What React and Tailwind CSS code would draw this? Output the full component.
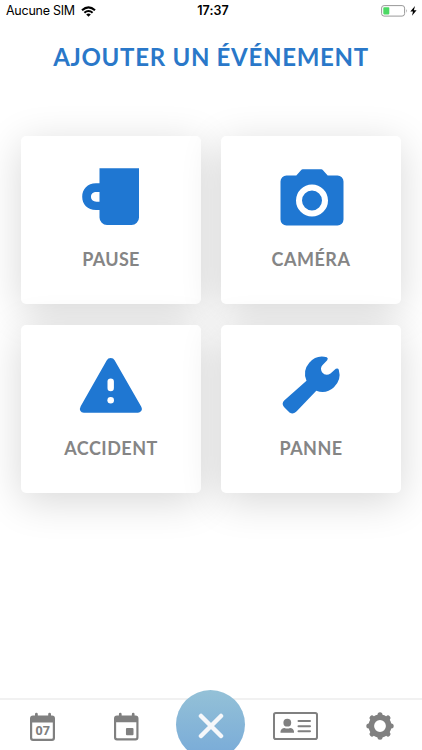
import clsx from "clsx";

const MugIcon = () => (
  <svg viewBox="0 0 72 72" className="w-[72px] h-[72px]" fill="currentColor">
    <path
      fillRule="evenodd"
      d="M24.5 8.3H64V57.5a7.5 7.5 0 0 1-7.5 7.5H32a7.5 7.5 0 0 1-7.5-7.5V50H21C12.5 50 7.2 44 7.2 36.7S12.5 23.3 21 23.3H24.5ZM24.5 32H21.5C18 32 16 34 16 36.8S18 41.7 21.5 41.7H24.5Z"
    />
  </svg>
);

const CameraIcon = () => (
  <svg viewBox="0 0 72 72" className="w-[72px] h-[72px]" fill="currentColor">
    <path d="M27.8 9.3H46.2Q47.3 9.3 48 10.2L52.7 15.5H62.5a6 6 0 0 1 6 6V59.5a6 6 0 0 1-6 6H11.5a6 6 0 0 1-6-6V21.5a6 6 0 0 1 6-6H21.3L26 10.2Q26.7 9.3 27.8 9.3Z" />
    <circle cx="37" cy="40.5" r="13" fill="none" stroke="white" strokeWidth="6" />
  </svg>
);

const WarningIcon = () => (
  <svg viewBox="0 0 72 72" className="w-[72px] h-[72px]" fill="currentColor">
    <path d="M31.8 11.2Q33 9.1 35.7 9.1T39.6 11.2L66 57.2Q67.7 60.2 66.2 62T62.8 63.7H8.8Q6.3 63.7 5.3 61.8T5.7 57.2Z" />
    <rect x="32.5" y="29.4" width="6.4" height="12.8" rx="3.2" fill="white" />
    <circle cx="35.7" cy="51.2" r="3.3" fill="white" />
  </svg>
);

const WrenchIcon = () => (
  <svg viewBox="0 0 72 72" className="w-[72px] h-[72px]" fill="currentColor">
    <path d="M31.5 31.8A17.3 17.3 0 0 1 51.8 8.2Q53.6 9.4 52.2 11.2L47.4 16.2Q44.8 19.3 47 23.2Q50.8 27.6 55.5 24.4L60.8 19.8Q63 18.6 63.8 20.8A17.3 17.3 0 0 1 41.3 41.8L21.7 62.3Q18.5 65.8 14.5 63.4L9 58Q6.2 54.6 9.2 51.5L31.5 31.8Z" />
  </svg>
);

const CalendarFrame = () => (
  <path
    fillRule="evenodd"
    d="M3 2.5H5V1.2a1.4 1.4 0 0 1 2.8 0V2.5H18.2V1.2a1.4 1.4 0 0 1 2.8 0V2.5H22a3 3 0 0 1 3 3V25a3 3 0 0 1-3 3H3a3 3 0 0 1-3-3V5.5a3 3 0 0 1 3-3ZM2.2 9.5V24.8a1 1 0 0 0 1 1H21.8a1 1 0 0 0 1-1V9.5Z"
  />
);

const CalendarDayIcon = () => (
  <svg viewBox="0 0 25 28" className="w-[25px] h-[28px] overflow-visible" fill="currentColor">
    <CalendarFrame />
    <text x="12.7" y="22" textAnchor="middle" className="font-['Open_Sans',sans-serif] text-[12.5px] font-bold">
      07
    </text>
  </svg>
);

const CalendarEventIcon = () => (
  <svg viewBox="0 0 25 28" className="w-[24.5px] h-[27.5px] overflow-visible" fill="currentColor">
    <CalendarFrame />
    <rect x="12.2" y="15.3" width="7.7" height="7.3" rx="1" />
  </svg>
);

const IdCardIcon = () => (
  <svg viewBox="0 0 45 28" className="w-[45px] h-[28px]" fill="currentColor">
    <rect x="1" y="1" width="43" height="26" rx="1.8" fill="none" stroke="currentColor" strokeWidth="2" />
    <circle cx="14.3" cy="10.7" r="3.9" />
    <path d="M7.5 20.8V19.5C7.5 17.5 9.5 16.2 11.5 16Q14.3 17.2 17.1 16C19.1 16.2 21 17.5 21 19.5V20.8Z" />
    <path d="M25.5 9H37M25.5 14.2H37M25.5 19.3H37" stroke="currentColor" strokeWidth="2" strokeLinecap="round" />
  </svg>
);

const GearIcon = () => (
  <svg viewBox="-14 -14 28 28" className="w-[28px] h-[28px]" fill="none" stroke="currentColor">
    <circle r="8.7" strokeWidth="5.6" />
    <path
      d="M0-10V-11.2M0 10V11.2M-10 0H-11.2M10 0H11.2M7-7L8-8M-7-7L-8-8M7 7L8 8M-7 7L-8 8"
      strokeWidth="5"
      strokeLinecap="round"
    />
  </svg>
);

const events = [
  { label: "PAUSE", icon: MugIcon, tracking: "tracking-[0.3px]" },
  { label: "CAMÉRA", icon: CameraIcon, tracking: "tracking-[0.5px]" },
  { label: "ACCIDENT", icon: WarningIcon, tracking: "tracking-[0.5px]" },
  { label: "PANNE", icon: WrenchIcon, tracking: "tracking-[0.4px]" },
];

const StatusBar = () => (
  <header className="grid grid-cols-3 items-center h-[22px] px-[6px] font-['Inter',sans-serif] text-[12.5px] text-black">
    <div className="flex items-center gap-[6px]">
      <span className="whitespace-nowrap tracking-[-0.25px]">Aucune SIM</span>
      <svg viewBox="0 0 15 11" className="w-[15px] h-[11px]" fill="none" stroke="black" strokeWidth="2.1">
        <path d="M1 4.3Q7.5-1.7 14 4.3M3.4 6.8Q7.5 3.2 11.6 6.8" />
        <path d="M5.2 8.4Q7.5 6.6 9.8 8.4L7.5 10.8Z" fill="black" stroke="none" />
      </svg>
    </div>
    <span className="text-center font-semibold pl-[4px] tracking-[0.1px]">17:37</span>
    <div className="flex items-center justify-end -mr-[1px]">
      <svg viewBox="0 0 36 12" className="w-[36px] h-[12px]">
        <rect x="0.6" y="0.6" width="23" height="10.5" rx="2.5" fill="none" stroke="#999" />
        <rect x="2.3" y="2.3" width="6" height="7.1" rx="0.8" fill="#4cd964" />
        <path d="M25 4Q26.5 5.8 25 7.7Z" fill="#999" />
        <path d="M34 1L29.3 6.6H32L31 10.8L35.6 5.2H32.9Z" fill="black" />
      </svg>
    </div>
  </header>
);

const EventCard = ({ label, icon: Icon, tracking }) => (
  <button className="flex flex-col items-center h-[168px] pt-6 rounded-[5px] bg-white text-[#1f77d2] shadow-[0_8px_40px_rgba(0,0,0,0.16)]">
    <Icon />
    <span className={clsx("mt-[15px] text-[18px] leading-6 font-bold text-[#858585]", tracking)}>{label}</span>
  </button>
);

const BottomNav = () => (
  <nav className="grid grid-cols-5 items-start justify-items-center h-[52px] border-t-2 border-[#f1f1f1] text-[#808080]">
    <div className="pt-[13px]">
      <CalendarDayIcon />
    </div>
    <div className="pt-[12.5px]">
      <CalendarEventIcon />
    </div>
    <button className="flex items-center justify-center -mt-[10px] pt-[2px] size-[69px] rounded-full bg-linear-to-b from-[#94c1d7] to-[#78aad8] shrink-0">
      <svg viewBox="0 0 26 26" className="w-[26px] h-[26px]" stroke="#f5f7fa" strokeWidth="4.5" strokeLinecap="round">
        <path d="M3 3L23 23M23 3L3 23" />
      </svg>
    </button>
    <div className="pt-[12px]">
      <IdCardIcon />
    </div>
    <div className="pt-[12px]">
      <GearIcon />
    </div>
  </nav>
);

const App = () => {
  return (
    <div className="flex flex-col h-[750px] w-full overflow-hidden bg-white font-['Lato',sans-serif]">
      <StatusBar />
      <h1 className="mt-[19px] text-center text-[24px] leading-8 font-bold tracking-[0.7px] text-[#2a78c9] whitespace-nowrap">
        AJOUTER UN ÉVÉNEMENT
      </h1>
      <main className="grid grid-cols-2 gap-x-5 gap-y-[20.5px] px-[21px] pt-[63px]">
        {events.map((event) => (
          <EventCard key={event.label} {...event} />
        ))}
      </main>
      <div className="flex-1" />
      <BottomNav />
    </div>
  );
};

export default App;
